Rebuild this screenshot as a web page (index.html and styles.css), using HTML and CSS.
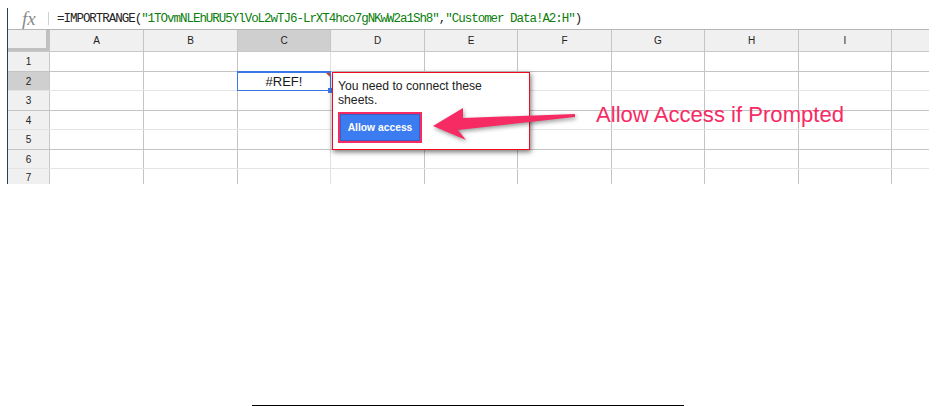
FILE: index.html
```html
<!DOCTYPE html>
<html lang="en">
<head>
<meta charset="utf-8">
<title>IMPORTRANGE</title>
<link rel="stylesheet" href="styles.css">
</head>
<body>
<main class="sheet">
  <div class="formula-bar">
    <span class="fx">fx</span>
    <span class="sep"></span>
    <span class="formula">=IMPORTRANGE(<span class="str">"1TOvmNLEhURU5YlVoL2wTJ6-LrXT4hco7gNKwW2a1Sh8"</span>,<span class="str">"Customer Data!A2:H"</span>)</span>
  </div>
  <div class="row head">
    <div class="cell corner"></div><div class="cell">A</div><div class="cell">B</div><div class="cell active">C</div><div class="cell">D</div><div class="cell">E</div><div class="cell">F</div><div class="cell">G</div><div class="cell">H</div><div class="cell">I</div><div class="cell"></div>
  </div>
  <div class="row tall strong"><div class="cell num">1</div><div class="cell"></div><div class="cell"></div><div class="cell"></div><div class="cell"></div><div class="cell"></div><div class="cell"></div><div class="cell"></div><div class="cell"></div><div class="cell"></div><div class="cell"></div></div>
  <div class="row short"><div class="cell num active">2</div><div class="cell"></div><div class="cell"></div><div class="cell value">#REF!</div><div class="cell"></div><div class="cell"></div><div class="cell"></div><div class="cell"></div><div class="cell"></div><div class="cell"></div><div class="cell"></div></div>
  <div class="row tall strong"><div class="cell num">3</div><div class="cell"></div><div class="cell"></div><div class="cell"></div><div class="cell"></div><div class="cell"></div><div class="cell"></div><div class="cell"></div><div class="cell"></div><div class="cell"></div><div class="cell"></div></div>
  <div class="row short"><div class="cell num">4</div><div class="cell"></div><div class="cell"></div><div class="cell"></div><div class="cell"></div><div class="cell"></div><div class="cell"></div><div class="cell"></div><div class="cell"></div><div class="cell"></div><div class="cell"></div></div>
  <div class="row tall strong"><div class="cell num">5</div><div class="cell"></div><div class="cell"></div><div class="cell"></div><div class="cell"></div><div class="cell"></div><div class="cell"></div><div class="cell"></div><div class="cell"></div><div class="cell"></div><div class="cell"></div></div>
  <div class="row short"><div class="cell num">6</div><div class="cell"></div><div class="cell"></div><div class="cell"></div><div class="cell"></div><div class="cell"></div><div class="cell"></div><div class="cell"></div><div class="cell"></div><div class="cell"></div><div class="cell"></div></div>
  <div class="row last"><div class="cell num">7</div><div class="cell"></div><div class="cell"></div><div class="cell"></div><div class="cell"></div><div class="cell"></div><div class="cell"></div><div class="cell"></div><div class="cell"></div><div class="cell"></div><div class="cell"></div></div>

  <div class="selection"><span class="flag"></span><span class="handle"></span></div>

  <div class="popup">
    <p class="popup-text">You need to connect these sheets.</p>
    <button class="allow" type="button">Allow access</button>
  </div>

  <svg class="arrow" width="160" height="50" viewBox="0 0 160 50" aria-hidden="true">
    <polygon points="3,31 33,13 33,23 145,19 145,22 28,35 36,45"/>
  </svg>

  <div class="callout">Allow Access if Prompted</div>
</main>
<hr class="rule">
</body>
</html>
```

FILE: styles.css
```css
html, body {
  margin: 0;
  padding: 0;
  background: #fff;
}

body {
  height: 406px;
  display: flex;
  flex-direction: column;
  overflow: hidden;
  font-family: "Liberation Sans", Arial, sans-serif;
}

.sheet {
  position: relative;
  width: 921px;
  height: 176px;
  margin: 8px 8px 0 7px;
  border-left: 1px solid #2f3f4f;
  overflow: hidden;
  flex: none;
}

.formula-bar {
  display: flex;
  align-items: center;
  height: 21px;
  border-bottom: 1px solid #b5b5b5;
}

.fx {
  width: 40px;
  padding-left: 14px;
  box-sizing: border-box;
  font-family: "Liberation Serif", serif;
  font-style: italic;
  font-size: 19px;
  line-height: 21px;
  color: #8a8a8a;
}

.sep {
  width: 1px;
  height: 13px;
  background: #d0d0d0;
}

.formula {
  margin-left: 8px;
  padding-top: 1px;
  font-family: "Liberation Mono", monospace;
  font-size: 12.5px;
  letter-spacing: -1.03px;
  color: #222;
  white-space: nowrap;
}

.str {
  color: #0b7d0b;
}

.row {
  display: grid;
  grid-template-columns: 42px 94px 94px 93px 94px 93px 94px 93px 94px 93px 37px;
  border-bottom: 1px solid #e4e4e4;
  box-sizing: border-box;
  height: 20px;
}

.row.strong { border-bottom-color: #c4c4c4; }
.row.tall { height: 20px; }
.row.short { height: 19px; }
.row.head {
  height: 22px;
  background: #f0f0f0;
  border-bottom-color: #c8c8c8;
}
.row.last {
  height: 17px;
  border-bottom: 0;
}

.cell {
  display: flex;
  align-items: center;
  justify-content: center;
  box-sizing: border-box;
  border-right: 1px solid #c4c4c4;
  font-size: 10px;
  color: #222;
}

.cell:nth-child(4),
.cell:nth-child(11) {
  border-right-color: #e0e0e0;
}

.cell:last-child { border-right: 0; }

.num {
  background: #f0f0f0;
  border-right-color: #c8c8c8;
}

.head .cell { border-right-color: #c4c4c4; }

.corner {
  background: #f0f0f0;
  box-shadow: inset -3px -3px 0 #c0c0c0;
}

.cell.active { background: #cfcfcf; }

.value {
  font-size: 13px;
  color: #1a1a1a;
}

.selection {
  position: absolute;
  left: 229px;
  top: 63px;
  width: 94px;
  height: 20px;
  box-sizing: border-box;
  border: 1px solid #3b78e7;
  border-top-width: 2px;
}

.flag {
  position: absolute;
  top: 0;
  right: 0;
  border-top: 4px solid #c8452f;
  border-left: 4px solid transparent;
}

.handle {
  position: absolute;
  right: -3px;
  bottom: -3px;
  width: 5px;
  height: 5px;
  background: #3b78e7;
}

.popup {
  position: absolute;
  left: 324px;
  top: 64px;
  width: 198px;
  height: 78px;
  box-sizing: border-box;
  padding: 6px 5px;
  background: #fff;
  border: 1px solid #ee0a22;
  box-shadow: 1px 2px 5px rgba(0, 0, 0, 0.55);
}

.popup-text {
  margin: 0;
  font-size: 12.2px;
  line-height: 14px;
  color: #222;
  width: 160px;
}

.allow {
  display: block;
  margin-top: 5px;
  width: 84px;
  height: 31px;
  padding: 0;
  box-sizing: border-box;
  background: #3b7cf0;
  border: 2px solid #f72b63;
  box-shadow: inset 0 0 0 1px #3a5fc0;
  font-family: inherit;
  font-weight: bold;
  font-size: 10.3px;
  color: #fff;
}

.arrow {
  position: absolute;
  left: 422px;
  top: 87px;
  filter: drop-shadow(1px 2px 2px rgba(0, 0, 0, 0.4));
}

.arrow polygon { fill: #f72b63; }

.callout {
  position: absolute;
  left: 588px;
  top: 94px;
  font-size: 22.1px;
  line-height: 26px;
  color: #f72b63;
  white-space: nowrap;
}

.rule {
  width: 432px;
  height: 1px;
  margin: auto 0 0 252px;
  border: 0;
  background: #000;
}
```
